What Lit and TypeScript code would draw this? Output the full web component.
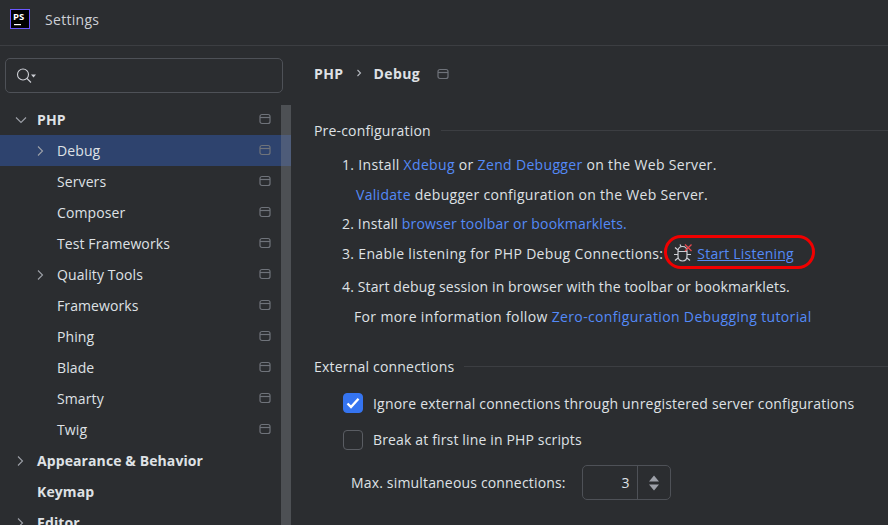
import { LitElement, html, css } from "lit";
import { customElement } from "lit/decorators.js";

const pin = html`<svg class="pin" width="12" height="12" viewBox="0 0 12 12" fill="none"><rect x="1" y="1.500" width="10" height="9" rx="2" stroke="#6f737a" stroke-width="1.200"/><path d="M1 4.500H11" stroke="#6f737a" stroke-width="1.200"/></svg>`;
const chevR = html`<svg width="10" height="12" viewBox="0 0 10 12" fill="none"><path d="M3 1.500L7.500 6L3 10.500" stroke="#9da0a8" stroke-width="1.100"/></svg>`;
const chevD = html`<svg width="12" height="10" viewBox="0 0 12 10" fill="none"><path d="M1 2.500L6 7.500L11 2.500" stroke="#9da0a8" stroke-width="1.100"/></svg>`;

type Row = { t: string; level: 0 | 1; chev?: "r" | "d"; sel?: boolean; pin?: boolean };
const rows: Row[] = [
  { t: "PHP", level: 0, chev: "d", pin: true },
  { t: "Debug", level: 1, chev: "r", sel: true, pin: true },
  { t: "Servers", level: 1, pin: true },
  { t: "Composer", level: 1, pin: true },
  { t: "Test Frameworks", level: 1, pin: true },
  { t: "Quality Tools", level: 1, chev: "r", pin: true },
  { t: "Frameworks", level: 1, pin: true },
  { t: "Phing", level: 1, pin: true },
  { t: "Blade", level: 1, pin: true },
  { t: "Smarty", level: 1, pin: true },
  { t: "Twig", level: 1, pin: true },
  { t: "Appearance & Behavior", level: 0, chev: "r" },
  { t: "Keymap", level: 0 },
  { t: "Editor", level: 0, chev: "r" },
];

@customElement("app-root")
export class AppRoot extends LitElement {
  static styles = css`
    :host { display: block; width: 888px; height: 525px; overflow: hidden; background: #2b2d30; color: #dfe1e5;
      font-family: "Open Sans", "Noto Sans", sans-serif; font-size: 14px; }
    * { box-sizing: border-box; }
    .title { height: 46px; display: flex; align-items: center; gap: 15px; padding: 0 0 7px 10px; border-bottom: 1px solid #3c3e42; color: #ced0d6; letter-spacing: 0.3px; }
    .main { display: flex; height: 479px; }
    .side { width: 291px; flex: none; display: flex; flex-direction: column; position: relative; overflow: hidden; }
    .search { margin: 12px 0 0 5px; width: 278px; height: 35px; flex: none; border: 1px solid #4e5157; border-radius: 5px; display: flex; align-items: center; padding-left: 10px; }
    .tree { display: flex; margin-top: 11px; flex: 1; min-height: 0; }
    .rows { flex: 1; min-width: 0; letter-spacing: 0.1px; }
    .bar { position: absolute; left: 281px; top: 59px; bottom: 0; width: 10px; background: rgba(125,128,136,.42); }
    .row { height: 31px; display: flex; align-items: center; color: #dfe1e5; position: relative; }
    .row.sel { background: #2e436e; width: 291px; }
    .row.l0 { font-weight: 700; padding-left: 37px; }
    .row.l1 { padding-left: 57px; }
    .chev { position: absolute; display: flex; }
    .l0 .chev { left: 15px; }
    .l1 .chev { left: 35px; }
    .row .pin { position: absolute; left: 259px; top: 9px; }
    .content { flex: 1; min-width: 0; padding: 0 0 0 23px; }
    .crumb { height: 54px; display: flex; align-items: center; gap: 10px; font-weight: 700; letter-spacing: 0.4px; }
    .crumb .sep { display: flex; margin: 0 1px; }
    .crumb .pin { margin: 1px 0 0 7px; }
    .section { display: flex; align-items: center; gap: 10px; height: 20px; }
    .section span { flex: none; color: #dfe1e5; }
    .section i { flex: 1; height: 1px; background: #3c3e42; }
    .pre { margin-top: 20px; letter-spacing: 0.18px; }
    .lines { padding-left: 28px; margin-top: 9px; }
    .line { height: 30px; display: flex; align-items: center; white-space: pre; }
    .line.ind { padding-left: 14px; letter-spacing: 0.3px; }
    .l1x { letter-spacing: 0.33px; }
    .l3x { height: 28px; letter-spacing: 0.17px; }
    .l4x { height: 32px; letter-spacing: 0.33px; }
    .l5x { height: 34px; letter-spacing: 0.13px; }
    .l6x { height: 26px; padding-left: 12px; letter-spacing: 0.36px; }
    a { color: #548af7; text-decoration: none; }
    .hl { display: flex; align-items: center; gap: 4px; margin-left: 10px; position: relative; letter-spacing: 0.2px; }
    .hl a { text-decoration: underline; }
    .ring { position: absolute; left: -9px; top: -8px; width: 151px; height: 34px; border: 3px solid #f00000; border-radius: 17px; pointer-events: none; }
    .ext { margin-top: 27px; letter-spacing: 0.2px; }
    .checks { padding-left: 29px; margin-top: 9px; }
    .ck { height: 36px; display: flex; align-items: center; gap: 10px; }
    .ck1 { letter-spacing: 0.2px; }
    .ck2 { height: 37px; letter-spacing: 0.15px; }
    .box { width: 20px; height: 20px; border-radius: 4px; border: 1px solid #5a5d63; flex: none; display: flex; align-items: center; justify-content: center; }
    .box.on { background: #3574f0; border-color: #3574f0; }
    .spin { display: flex; align-items: center; margin: 7px 0 0 37px; gap: 16px; letter-spacing: 0.17px; }
    .field { width: 89px; height: 35px; border: 1px solid #4e5157; border-radius: 5px; display: flex; }
    .val { flex: 1; text-align: right; padding-right: 7px; line-height: 33px; }
    .arrows { width: 33px; border-left: 1px solid #4e5157; display: flex; align-items: center; justify-content: center; }
  `;

  render() {
    return html`
      <div class="title">
        <svg width="20" height="20" viewBox="0 0 20 20"><rect x=".5" y=".5" width="19" height="19" fill="#000" stroke="#6b57ff"/><text x="3" y="11" font-size="9.500" font-weight="700" fill="#fff" letter-spacing="0" font-family="Open Sans">PS</text><rect x="4" y="15" width="7" height="1.200" fill="#fff"/></svg>
        <span>Settings</span>
      </div>
      <div class="main">
        <div class="side">
          <div class="search">
            <svg width="22" height="18" viewBox="0 0 22 18" fill="none"><circle cx="7" cy="7.500" r="5.500" stroke="#ced0d6" stroke-width="1.100"/><path d="M11 11.500L15 15.500" stroke="#ced0d6" stroke-width="1.100"/><path d="M15 7.500h5l-2.500 3z" fill="#ced0d6"/></svg>
          </div>
          <div class="tree"><div class="rows">
            ${rows.map((r) => html`<div class="row l${r.level} ${r.sel ? "sel" : ""}">
              ${r.chev ? html`<span class="chev">${r.chev === "d" ? chevD : chevR}</span>` : ""}
              <span>${r.t}</span>${r.pin ? pin : ""}
            </div>`)}
          </div></div>
          <div class="bar"></div>
        </div>
        <div class="content">
          <div class="crumb"><span>PHP</span><span class="sep"><svg width="8" height="10" viewBox="0 0 8 10" fill="none"><path d="M2.500 2L5.500 5L2.500 8" stroke="#b4b8bf" stroke-width="1.100"/></svg></span><span>Debug</span>${pin}</div>
          <div class="section pre"><span>Pre-configuration</span><i></i></div>
          <div class="lines">
            <div class="line l1x">1. Install <a>Xdebug</a> or <a>Zend Debugger</a> on the Web Server.</div>
            <div class="line ind"><a>Validate</a> debugger configuration on the Web Server.</div>
            <div class="line l3x">2. Install <a>browser toolbar or bookmarklets.</a></div>
            <div class="line l4x">3. Enable listening for PHP Debug Connections:<span class="hl">
              <svg width="20" height="20" viewBox="0 0 20 20" fill="none" stroke="#ced0d6" stroke-width="1.200"><path d="M5 8.500C5 5 7 3.500 9.500 3.500S14 5 14 8.500V13C14 16.500 12 18 9.500 18S5 16.500 5 13Z"/><path d="M5 8.500H14M5 11.500H1M18 11.500H14M5 7L2 4.500M14 15L17 17.500M5 15L2 17.500M7 1.500L8 3.500"/><path d="M12 1.500l6.500 6.500M18.500 1.500L12 8" stroke="#e5484d" stroke-width="1.300"/></svg>
              <a>Start Listening</a><div class="ring"></div></span></div>
            <div class="line l5x">4. Start debug session in browser with the toolbar or bookmarklets.</div>
            <div class="line l6x">For more information follow <a>Zero-configuration Debugging tutorial</a></div>
          </div>
          <div class="section ext"><span>External connections</span><i></i></div>
          <div class="checks">
            <div class="ck ck1"><span class="box on"><svg width="14" height="12" viewBox="0 0 14 12" fill="none"><path d="M1.500 6.500L5 10L12.500 1.800" stroke="#fff" stroke-width="2.400"/></svg></span><span>Ignore external connections through unregistered server configurations</span></div>
            <div class="ck ck2"><span class="box"></span><span>Break at first line in PHP scripts</span></div>
          </div>
          <div class="spin"><span>Max. simultaneous connections:</span>
            <div class="field"><div class="val">3</div><div class="arrows"><svg width="12" height="18" viewBox="0 0 12 18"><path d="M1 7.500L6 1.500L11 7.500zM1 10.500L6 16.500L11 10.500z" fill="#9da0a8"/></svg></div></div>
          </div>
        </div>
      </div>
    `;
  }
}
